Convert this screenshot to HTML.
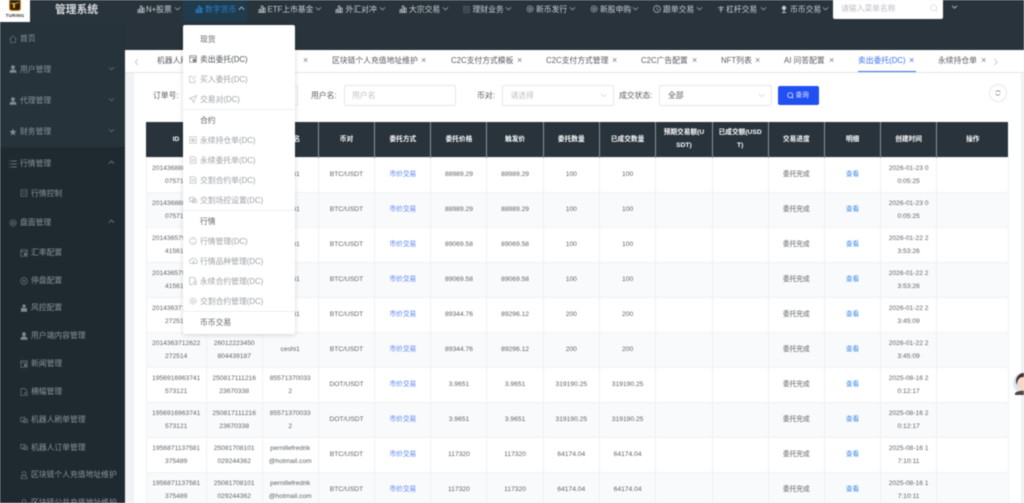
<!DOCTYPE html>
<html lang="zh"><head><meta charset="utf-8"><title>管理系统</title>
<style>
html,body{margin:0;padding:0;width:1024px;height:503px;overflow:hidden;background:#f0f2f5}
#r{position:absolute;left:0;top:0;width:1024px;height:503px;overflow:hidden;font-family:"Liberation Sans","Noto Sans CJK SC",sans-serif;font-size:7.8px;color:#606266;filter:blur(.42px)}
.a{position:absolute;white-space:nowrap;line-height:12px}
.b{position:absolute}
.n{color:#cdd2d6;margin-top:1px}
.s{color:#8a959b}
.s2{color:#8a959b;margin-top:1px}
.t{color:#55585c;margin-top:.6px}
.x{color:#777b80;font-size:9px}
.m{color:#9da0a5;margin-top:1px}
.h{color:#5f6266;margin-top:1px}
.f{margin-top:.6px}
svg{position:absolute;overflow:visible;fill:none}
table{position:absolute;left:145.7px;top:122px;width:863.3px;border-collapse:collapse;table-layout:fixed;font-size:6.7px;color:#5f6367;text-align:center}
th{height:35px;padding:0;background:#28333b;color:#fff;font-weight:bold;border-left:.7px solid #8a9297;line-height:13px;box-sizing:border-box}
th:first-child{border-left:0}
td{height:35px;padding:0;line-height:13px;border:.6px solid #eef0f5;box-sizing:border-box}
tr:nth-child(even) td{background:#f9fafb}
.l{color:#5583f0}
.v{color:#3c8ae6}
</style></head><body><div id="r">
<svg width="0" height="0"><defs>
<symbol id="bar" viewBox="0 0 8 8"><path d="M1 7.500V4.500h1.600v3M3.300 7.500V1h1.600v6.500M5.600 7.500V3h1.600v4.500M.3 7.500h7.400" stroke="#b9bfc3" stroke-width=".8"/></symbol>
<symbol id="barb" viewBox="0 0 8 8"><path d="M1 7.500V4.500h1.600v3M3.300 7.500V1h1.600v6.500M5.600 7.500V3h1.600v4.500M.3 7.500h7.400" stroke="#2a82d0" stroke-width=".8"/></symbol>
<symbol id="gear" viewBox="0 0 8 8"><circle cx="4" cy="4" r="3" stroke="#aab1b5" stroke-width="1" stroke-dasharray="1.100 .5"/><circle cx="4" cy="4" r="1.200" stroke="#aab1b5" stroke-width=".7"/></symbol>
<symbol id="doc" viewBox="0 0 8 8"><path d="M1.200.7h4L7 2.400v4.900H1.200zM2.400 3.500h3.400M2.400 5.200h3.400" stroke="#b5b8ba" stroke-width=".7"/></symbol>
<symbol id="sdoc" viewBox="0 0 8 8"><path d="M1 .7h6v6.600H1zM2.200 2.800h3.600M2.200 4.800h3.600" stroke="#6d777c" stroke-width=".7"/></symbol>
<symbol id="usr" viewBox="0 0 8 8"><circle cx="4" cy="2.200" r="1.900" fill="#7f8a90"/><path d="M.4 7.800C.4 5.400 2 4.400 4 4.400s3.600 1 3.600 3.400z" fill="#7f8a90"/></symbol>
<symbol id="chev" viewBox="0 0 8 8"><path d="M1 2.700 4 5.600 7 2.700" stroke="#aab1b5" stroke-width=".8"/></symbol>
<symbol id="up" viewBox="0 0 8 8"><path d="M1 5.300 4 2.400 7 5.300" stroke="#7f8a90" stroke-width=".8"/></symbol>
</defs></svg>

<!-- header & sidebar -->
<div class="b" style="left:0;top:0;width:1024px;height:50px;background:#28333b"></div>
<div class="b" style="left:0;top:22px;width:125px;height:125px;background:#27333a"></div>
<div class="b" style="left:0;top:147px;width:125px;height:356px;background:#1f2a30"></div>
<div class="b" style="left:0;top:0;width:29.500px;height:22px;background:#fff"></div>
<div class="b" style="left:8.500px;top:-1px;width:12.500px;height:12px;background:#e0950f;border-radius:0 0 2.500px 2.500px"></div>
<div class="b" style="left:10px;top:-1px;width:9.500px;height:10.500px;background:#2b2115;border-radius:0 0 2px 2px"></div>
<div class="b" style="left:11px;top:2.500px;width:6px;height:1.800px;background:#eba521"></div>
<div class="b" style="left:13.300px;top:2.500px;width:2px;height:5.500px;background:#eba521"></div>
<div class="b" style="left:17.300px;top:1.500px;width:1.300px;height:1.300px;background:#eba521;border-radius:50%"></div>
<div class="a" style="left:3px;top:10px;width:24px;text-align:center;font-size:4.500px;font-weight:bold;color:#2d2d2d;letter-spacing:.25px">TURING</div>
<div class="a" style="left:55px;top:3.600px;font-size:10.800px;font-weight:bold;color:#d6dadd">管理系统</div>

<!-- nav -->
<div class="b" style="left:183px;top:0;width:63.700px;height:22px;background:#1f3b4c"></div>
<svg style="left:136.500px;top:5px" width="8" height="8"><use href="#bar"/></svg>
<div class="a n" style="left:146px;top:3px">N+股票</div><svg style="left:173.500px;top:5px" width="7" height="7"><use href="#chev"/></svg>
<svg style="left:194.500px;top:5px" width="8" height="8"><use href="#barb"/></svg>
<div class="a" style="left:205px;top:4px;color:#2a82d0">数字货币</div>
<svg style="left:237.500px;top:5px" width="7" height="7"><path d="M.8 4.700 3.500 2 6.200 4.700" stroke="#b9cbd6" stroke-width=".8"/></svg>
<svg style="left:257.500px;top:5px" width="8" height="8"><use href="#bar"/></svg>
<div class="a n" style="left:267.500px;top:3px">ETF上市基金</div><svg style="left:315px;top:5px" width="7" height="7"><use href="#chev"/></svg>
<svg style="left:335px;top:5px" width="8" height="8"><use href="#bar"/></svg>
<div class="a n" style="left:345.500px;top:3px">外汇对冲</div><svg style="left:378.500px;top:5px" width="7" height="7"><use href="#chev"/></svg>
<svg style="left:399px;top:5px" width="8" height="8"><use href="#bar"/></svg>
<div class="a n" style="left:409px;top:3px">大宗交易</div><svg style="left:442px;top:5px" width="7" height="7"><use href="#chev"/></svg>
<svg style="left:463px;top:5.500px" width="7" height="7"><use href="#sdoc"/></svg>
<div class="a n" style="left:472.500px;top:3px">理财业务</div><svg style="left:505px;top:5px" width="7" height="7"><use href="#chev"/></svg>
<svg style="left:526px;top:5px" width="8" height="8"><use href="#gear"/></svg>
<div class="a n" style="left:536px;top:3px">新币发行</div><svg style="left:569px;top:5px" width="7" height="7"><use href="#chev"/></svg>
<svg style="left:590px;top:5px" width="8" height="8"><use href="#gear"/></svg>
<div class="a n" style="left:600px;top:3px">新股申购</div><svg style="left:632px;top:5px" width="7" height="7"><use href="#chev"/></svg>
<svg style="left:652.500px;top:5px" width="8" height="8"><circle cx="4" cy="4" r="3.400" stroke="#b9bfc3" stroke-width=".7"/><path d="M4 2v2.200l1.300 1" stroke="#b9bfc3" stroke-width=".6"/></svg>
<div class="a n" style="left:663px;top:3px">跟单交易</div><svg style="left:696px;top:5px" width="7" height="7"><use href="#chev"/></svg>
<svg style="left:716.500px;top:5px" width="8" height="8"><path d="M1 2.500h6M4 1v6.500M2 4.500h4" stroke="#b9bfc3" stroke-width=".8"/></svg>
<div class="a n" style="left:726px;top:3px">杠杆交易</div><svg style="left:759.500px;top:5px" width="7" height="7"><use href="#chev"/></svg>
<svg style="left:780px;top:5px" width="8" height="8"><circle cx="4" cy="3" r="2.200" fill="#c3c8cc"/><path d="M2 7.500h4" stroke="#c3c8cc"/><path d="M4 5v2.500" stroke="#c3c8cc" stroke-width=".8"/></svg>
<div class="a n" style="left:790px;top:3px">币币交易</div><svg style="left:822px;top:5px" width="7" height="7"><use href="#chev"/></svg>
<div class="b" style="left:832.500px;top:-2px;width:110.500px;height:21px;background:#fff;border-radius:2px"></div>
<div class="a" style="left:841px;top:2.500px;color:#b8bcc4">请输入菜单名称</div>
<svg style="left:929.500px;top:4px" width="8" height="8"><circle cx="3.800" cy="3.800" r="3" stroke="#d5d7da" stroke-width=".7"/><path d="M6 6l1.300 1.300" stroke="#d5d7da" stroke-width=".7"/></svg>
<svg style="left:951px;top:4px" width="7" height="7"><path d="M1 1.800 3.500 4.200 6 1.800" stroke="#c3c8cc" stroke-width=".8"/></svg>

<!-- sidebar items -->
<svg style="left:9px;top:34.500px" width="8" height="8"><path d="M.5 4 4 .8 7.500 4M1.500 3.300v4.200h5V3.300" stroke="#67727a" stroke-width=".7"/></svg>
<div class="a s" style="left:20px;top:32.500px">首页</div>
<svg style="left:9px;top:65px" width="8" height="8"><use href="#usr"/></svg><div class="a s" style="left:20px;top:63.500px">用户管理</div><svg style="left:107.500px;top:65px" width="7" height="7"><path d="M1 2.200 3.500 4.700 6 2.200" stroke="#6a757b" stroke-width=".7"/></svg>
<svg style="left:9px;top:96.500px" width="8" height="8"><use href="#usr"/></svg><div class="a s" style="left:20px;top:94.500px">代理管理</div><svg style="left:107.500px;top:96px" width="7" height="7"><path d="M1 2.200 3.500 4.700 6 2.200" stroke="#6a757b" stroke-width=".7"/></svg>
<svg style="left:9px;top:128px" width="8" height="8"><path d="M4 .5l1 2.400 2.600.2-2 1.700.6 2.600L4 6 1.800 7.400l.6-2.600-2-1.700 2.600-.2z" fill="#7f8a90"/></svg><div class="a s" style="left:20px;top:126px">财务管理</div><svg style="left:107.500px;top:127px" width="7" height="7"><path d="M1 2.200 3.500 4.700 6 2.200" stroke="#6a757b" stroke-width=".7"/></svg>
<svg style="left:9px;top:159.500px" width="8" height="8"><path d="M.2 1h.9M2 1h5.800M.2 4h.9M2 4h5.800M.2 7h.9M2 7h5.800" stroke="#7f8a90" stroke-width=".7"/></svg><div class="a s" style="left:20px;top:158px">行情管理</div><svg style="left:107.500px;top:159px" width="7" height="7"><use href="#up"/></svg>
<svg style="left:20px;top:189px" width="8" height="8"><use href="#sdoc"/></svg><div class="a s2" style="left:31px;top:186.500px">行情控制</div>
<svg style="left:9px;top:219px" width="8" height="8"><circle cx="4" cy="4" r="3" stroke="#6d777c" stroke-width="1" stroke-dasharray="1.100 .5"/><circle cx="4" cy="4" r="1.200" stroke="#6d777c" stroke-width=".7"/></svg><div class="a s" style="left:20px;top:217px">盘面管理</div><svg style="left:107.500px;top:218px" width="7" height="7"><use href="#up"/></svg>
<svg style="left:20px;top:249px" width="8" height="8"><path d="M.8.700h6.400v6.600H.8zM.8 2.500h6.400" stroke="#6d777c" stroke-width=".7"/><rect x="4" y="4" width="2.500" height="2.500" fill="#6d777c"/></svg><div class="a s2" style="left:31px;top:246px">汇率配置</div>
<svg style="left:20px;top:276.500px" width="8" height="8"><circle cx="4" cy="4" r="3.400" stroke="#6d777c" stroke-width=".7"/><circle cx="4" cy="4" r="1" stroke="#6d777c" stroke-width=".7"/></svg><div class="a s2" style="left:31px;top:273.500px">停盘配置</div>
<svg style="left:20px;top:304px" width="8" height="8"><circle cx="4" cy="2" r="1.600" fill="#7f8a90"/><rect x="1" y="4" width="6" height="3.800" fill="#7f8a90"/></svg><div class="a s2" style="left:31px;top:301px">风控配置</div>
<svg style="left:20px;top:332px" width="8" height="8"><use href="#usr"/></svg><div class="a s2" style="left:31px;top:329px">用户端内容管理</div>
<svg style="left:20px;top:360px" width="8" height="8"><path d="M.8.700h6.400v6.600H.8zM.8 2.500h6.400" stroke="#6d777c" stroke-width=".7"/><rect x="4" y="4" width="2.500" height="2.500" fill="#6d777c"/></svg><div class="a s2" style="left:31px;top:357px">新闻管理</div>
<svg style="left:20px;top:388px" width="8" height="8"><path d="M1 .5h4L6.500 2v2M3.500 7.500H1V.5" stroke="#6d777c" stroke-width=".7"/><circle cx="6" cy="6" r="1.500" stroke="#6d777c" stroke-width=".7"/></svg><div class="a s2" style="left:31px;top:385px">横幅管理</div>
<svg style="left:20px;top:416px" width="8" height="8"><path d="M.7 1.500h4.600v4H.7zM3.500 3.500h4v3h-4z" stroke="#6d777c" stroke-width=".7"/></svg><div class="a s2" style="left:31px;top:413px">机器人刷单管理</div>
<svg style="left:20px;top:443px" width="8" height="8"><path d="M.7 1.500h4.600v4H.7zM3.500 3.500h4v3h-4z" stroke="#6d777c" stroke-width=".7"/></svg><div class="a s2" style="left:31px;top:440.500px">机器人订单管理</div>
<svg style="left:20px;top:471px" width="8" height="8"><circle cx="4" cy="2.500" r="1.900" stroke="#6d777c" stroke-width=".7"/><path d="M1 7.500c0-2 1.200-3 3-3s3 1 3 3z" stroke="#6d777c" stroke-width=".7"/></svg><div class="a s2" style="left:31px;top:468px">区块链个人充值地址维护</div>
<svg style="left:20px;top:499px" width="8" height="8"><circle cx="4" cy="2.500" r="1.900" stroke="#6d777c" stroke-width=".7"/><path d="M1 7.500c0-2 1.200-3 3-3s3 1 3 3z" stroke="#6d777c" stroke-width=".7"/></svg><div class="a s2" style="left:31px;top:496px">区块链公共充值地址维护</div>

<!-- main -->
<div class="b" style="left:125px;top:50px;width:899px;height:453px;background:#f0f2f5"></div>
<div class="b" style="left:134px;top:72px;width:886.500px;height:431px;background:#fff"></div>
<div class="b" style="left:125px;top:50px;width:899px;height:21.500px;background:#fff;border-bottom:.8px solid #e3e5e8"></div>

<!-- tabs -->
<svg style="left:133.500px;top:57.500px" width="6" height="8"><path d="M4 1 1.300 4 4 7" stroke="#b8bbbf" stroke-width=".7"/></svg>
<div class="a t" style="left:157px;top:54.500px">机器人刷单管理</div><div class="a x" style="left:303px;top:54px">×</div>
<div class="a t" style="left:332px;top:54.500px">区块链个人充值地址维护</div><div class="a x" style="left:421px;top:54px">×</div>
<div class="a t" style="left:451px;top:54.500px">C2C支付方式模板</div><div class="a x" style="left:517px;top:54px">×</div>
<div class="a t" style="left:546px;top:54.500px">C2C支付方式管理</div><div class="a x" style="left:612px;top:54px">×</div>
<div class="a t" style="left:641px;top:54.500px">C2C广告配置</div><div class="a x" style="left:692px;top:54px">×</div>
<div class="a t" style="left:721px;top:54.500px">NFT列表</div><div class="a x" style="left:755px;top:54px">×</div>
<div class="a t" style="left:784px;top:54.500px">AI 问答配置</div><div class="a x" style="left:829px;top:54px">×</div>
<div class="a" style="left:858px;top:55px;color:#3a6ff0">卖出委托(DC)</div><div class="a" style="left:909px;top:54px;font-size:9px;color:#3a6ff0">×</div>
<div class="b" style="left:857.500px;top:70.700px;width:58.500px;height:1px;background:#3a6ff0"></div>
<div class="a t" style="left:938px;top:54.500px">永续持仓单</div><div class="a x" style="left:981px;top:54px">×</div>
<svg style="left:993px;top:57.500px" width="6" height="8"><path d="M1.500 1 4.200 4 1.500 7" stroke="#b8bbbf" stroke-width=".7"/></svg>

<!-- filters -->
<div class="a t" style="left:153px;top:89.400px">订单号:</div>
<div class="b" style="left:183px;top:84.500px;width:114.500px;height:21px;border:.7px solid #e4e7ed;border-radius:2px;box-sizing:border-box"></div>
<div class="a t" style="left:311px;top:89.400px">用户名:</div>
<div class="b" style="left:343.500px;top:84.500px;width:112.500px;height:21px;border:.7px solid #e4e7ed;border-radius:2px;box-sizing:border-box"></div>
<div class="a f" style="left:352px;top:89.400px;color:#bbbfc7">用户名</div>
<div class="a t" style="left:477px;top:89.400px">币对:</div>
<div class="b" style="left:501.500px;top:84.500px;width:112.500px;height:21px;border:.7px solid #e4e7ed;border-radius:2px;box-sizing:border-box"></div>
<div class="a f" style="left:510.500px;top:89.400px;color:#bbbfc7">请选择</div>
<svg style="left:600px;top:91.500px" width="7" height="7"><path d="M.8 2 3.500 4.700 6.200 2" stroke="#c9cdd3" stroke-width=".6"/></svg>
<div class="a t" style="left:619px;top:89.400px">成交状态:</div>
<div class="b" style="left:659px;top:84.500px;width:112.800px;height:21px;border:.7px solid #e4e7ed;border-radius:2px;box-sizing:border-box"></div>
<div class="a t" style="left:668px;top:89.400px">全部</div>
<svg style="left:758px;top:91.500px" width="7" height="7"><path d="M.8 2 3.500 4.700 6.200 2" stroke="#c9cdd3" stroke-width=".6"/></svg>
<div class="b" style="left:777.500px;top:86px;width:41px;height:19px;background:#2150f2;border-radius:2px"></div>
<svg style="left:786.500px;top:92px" width="7" height="7"><circle cx="3.200" cy="3.200" r="2.500" stroke="#fff" stroke-width=".7"/><path d="M5 5l1.200 1.200" stroke="#fff" stroke-width=".7"/></svg>
<div class="a" style="left:795.500px;top:90px;color:#e8eeff;font-size:6.700px">查询</div>
<div class="b" style="left:989px;top:84.300px;width:18px;height:18px;border:.7px solid #e6e8eb;border-radius:50%;box-sizing:border-box"></div>
<svg style="left:995px;top:90.300px" width="6" height="6"><path d="M5.300 2.300A2.500 2.500 0 0 0 .8 2M.7 3.700A2.500 2.500 0 0 0 5.200 4" stroke="#77797c" stroke-width=".7"/></svg>

<!-- table -->
<table>
<colgroup><col style="width:60px"><col style="width:56px"><col style="width:56px"><col style="width:56.600px"><col style="width:56.200px"><col style="width:56px"><col style="width:56.200px"><col style="width:56.300px"><col style="width:56.300px"><col style="width:56.400px"><col style="width:56px"><col style="width:56.300px"><col style="width:56.200px"><col style="width:56px"><col></colgroup>
<thead><tr><th>ID</th><th>订单号</th><th>用户名</th><th>币对</th><th>委托方式</th><th>委托价格</th><th>触发价</th><th>委托数量</th><th>已成交数量</th><th>预期交易额(U<br>SDT)</th><th>已成交额(USD<br>T)</th><th>交易进度</th><th>明细</th><th>创建时间</th><th>操作</th></tr></thead>
<tbody>
<tr><td>2014368881622<br>075714</td><td>260123000525<br>804439187</td><td>ceshi1</td><td>BTC/USDT</td><td class="l">市价交易</td><td>88989.29</td><td>88989.29</td><td>100</td><td>100</td><td></td><td></td><td>委托完成</td><td class="v">查看</td><td>2026-01-23 0<br>0:05:25</td><td></td></tr>
<tr><td>2014368881622<br>075714</td><td>260123000525<br>804439187</td><td>ceshi1</td><td>BTC/USDT</td><td class="l">市价交易</td><td>88989.29</td><td>88989.29</td><td>100</td><td>100</td><td></td><td></td><td>委托完成</td><td class="v">查看</td><td>2026-01-23 0<br>0:05:25</td><td></td></tr>
<tr><td>2014365791622<br>415614</td><td>260122235326<br>804439187</td><td>ceshi1</td><td>BTC/USDT</td><td class="l">市价交易</td><td>89069.58</td><td>89069.58</td><td>100</td><td>100</td><td></td><td></td><td>委托完成</td><td class="v">查看</td><td>2026-01-22 2<br>3:53:26</td><td></td></tr>
<tr><td>2014365791622<br>415614</td><td>260122235326<br>804439187</td><td>ceshi1</td><td>BTC/USDT</td><td class="l">市价交易</td><td>89069.58</td><td>89069.58</td><td>100</td><td>100</td><td></td><td></td><td>委托完成</td><td class="v">查看</td><td>2026-01-22 2<br>3:53:26</td><td></td></tr>
<tr><td>2014363712622<br>272514</td><td>26012223450<br>804439187</td><td>ceshi1</td><td>BTC/USDT</td><td class="l">市价交易</td><td>89344.76</td><td>89296.12</td><td>200</td><td>200</td><td></td><td></td><td>委托完成</td><td class="v">查看</td><td>2026-01-22 2<br>3:45:09</td><td></td></tr>
<tr><td>2014363712622<br>272514</td><td>26012223450<br>804439187</td><td>ceshi1</td><td>BTC/USDT</td><td class="l">市价交易</td><td>89344.76</td><td>89296.12</td><td>200</td><td>200</td><td></td><td></td><td>委托完成</td><td class="v">查看</td><td>2026-01-22 2<br>3:45:09</td><td></td></tr>
<tr><td>1956916963741<br>573121</td><td>250817111216<br>23670338</td><td>85571370033<br>2</td><td>DOT/USDT</td><td class="l">市价交易</td><td>3.9651</td><td>3.9651</td><td>319190.25</td><td>319190.25</td><td></td><td></td><td>委托完成</td><td class="v">查看</td><td>2025-08-16 2<br>0:12:17</td><td></td></tr>
<tr><td>1956916963741<br>573121</td><td>250817111216<br>23670338</td><td>85571370033<br>2</td><td>DOT/USDT</td><td class="l">市价交易</td><td>3.9651</td><td>3.9651</td><td>319190.25</td><td>319190.25</td><td></td><td></td><td>委托完成</td><td class="v">查看</td><td>2025-08-16 2<br>0:12:17</td><td></td></tr>
<tr><td>1956871137581<br>375489</td><td>25081708101<br>029244362</td><td>pernillefredrik<br>@hotmail.com</td><td>BTC/USDT</td><td class="l">市价交易</td><td>117320</td><td>117320</td><td>64174.04</td><td>64174.04</td><td></td><td></td><td>委托完成</td><td class="v">查看</td><td>2025-08-16 1<br>7:10:11</td><td></td></tr>
<tr><td>1956871137581<br>375489</td><td>25081708101<br>029244362</td><td>pernillefredrik<br>@hotmail.com</td><td>BTC/USDT</td><td class="l">市价交易</td><td>117320</td><td>117320</td><td>64174.04</td><td>64174.04</td><td></td><td></td><td>委托完成</td><td class="v">查看</td><td>2025-08-16 1<br>7:10:11</td><td></td></tr>
</tbody></table>

<!-- avatar -->
<svg style="left:1013px;top:372px" width="22" height="22"><circle cx="11" cy="11" r="11" fill="#dbe6f7"/><circle cx="11" cy="9" r="8" fill="#4a2f28"/><ellipse cx="10" cy="12" rx="6" ry="7" fill="#f4d9cb"/><path d="M2 21c3-3 12-3 16 0v2H2z" fill="#55443f"/></svg>

<!-- dropdown -->
<div class="b" style="left:183px;top:25px;width:111.500px;height:309px;background:#fff;border-radius:2px;box-shadow:0 1px 5px rgba(0,0,0,.16)"></div>
<div class="b" style="left:183px;top:108.500px;width:111.500px;height:.7px;background:#eceef1"></div>
<div class="b" style="left:183px;top:209.500px;width:111.500px;height:.7px;background:#eceef1"></div>
<div class="b" style="left:183px;top:310.500px;width:111.500px;height:.7px;background:#eceef1"></div>
<div class="a h" style="left:200px;top:33px">现货</div>
<svg style="left:189px;top:55px" width="8" height="8"><path d="M.7.700h6.600v6.600H.7zM.7 2.400h6.600" stroke="#777" stroke-width=".7"/><rect x="3.800" y="3.800" width="3" height="3" fill="#777"/></svg>
<div class="a h" style="left:200px;top:53px;color:#4f5256">卖出委托(DC)</div>
<svg style="left:189px;top:75px" width="8" height="8"><path d="M6 4.500v3H.7V1.500h3.500M3.500 4.500 7 1" stroke="#bcbcbc" stroke-width=".7"/></svg>
<div class="a m" style="left:200px;top:73px">买入委托(DC)</div>
<svg style="left:189px;top:95px" width="8" height="8"><path d="M7.500.5.500 3.500l3 1 1 3z" stroke="#bcbcbc" stroke-width=".7"/></svg>
<div class="a m" style="left:200px;top:93px">交易对(DC)</div>
<div class="a h" style="left:200px;top:114px">合约</div>
<svg style="left:189px;top:136px" width="8" height="8"><path d="M.7.700h6.600v6.600H.7z" stroke="#bcbcbc" stroke-width=".7"/><rect x="2.200" y="2.400" width="3.600" height="3.600" fill="#cfcfcf"/></svg>
<div class="a m" style="left:200px;top:134px">永续持仓单(DC)</div>
<svg style="left:189px;top:156px" width="8" height="8"><use href="#doc"/></svg>
<div class="a m" style="left:200px;top:154px">永续委托单(DC)</div>
<svg style="left:189px;top:176px" width="8" height="8"><use href="#doc"/></svg>
<div class="a m" style="left:200px;top:174px">交割合约单(DC)</div>
<svg style="left:189px;top:196px" width="8" height="8"><path d="M.7 1.500h4.600v4H.7zM3.500 3.500h4v3h-4z" stroke="#b5b8ba" stroke-width=".8"/></svg>
<div class="a m" style="left:200px;top:194px">交割场控设置(DC)</div>
<div class="a h" style="left:200px;top:214.500px">行情</div>
<svg style="left:189px;top:236.500px" width="8" height="8"><circle cx="4" cy="4" r="3.300" stroke="#c5c5c5" stroke-width=".8"/><path d="M2.800 2.500h2.400M2.800 5.500h2.400" stroke="#c5c5c5" stroke-width=".6"/></svg>
<div class="a m" style="left:200px;top:234.500px">行情管理(DC)</div>
<svg style="left:188.500px;top:256.500px" width="9" height="8"><path d="M2.500 6.500a2 2 0 0 1-.2-4A2.500 2.500 0 0 1 7 3a1.800 1.800 0 0 1 0 3.500zM4.500 3v3M3.500 5l1 1 1-1" stroke="#b5b8ba" stroke-width=".7"/></svg>
<div class="a m" style="left:200px;top:254.500px">行情品种管理(DC)</div>
<svg style="left:189px;top:276.500px" width="8" height="8"><path d="M.7.300h4L6.500 2v2.500M3.500 7.500H.7V.3" stroke="#aeb1b3" stroke-width=".7"/><circle cx="6" cy="6" r="1.500" stroke="#aeb1b3" stroke-width=".7"/></svg>
<div class="a m" style="left:200px;top:274.500px">永续合约管理(DC)</div>
<svg style="left:189px;top:297px" width="8" height="8"><circle cx="4" cy="4" r="3" stroke="#c5c5c5" stroke-width="1" stroke-dasharray="1.100 .5"/><circle cx="4" cy="4" r="1.200" stroke="#c5c5c5" stroke-width=".7"/></svg>
<div class="a m" style="left:200px;top:295px">交割合约管理(DC)</div>
<div class="a h" style="left:200px;top:315.500px">币币交易</div>
</div></body></html>
